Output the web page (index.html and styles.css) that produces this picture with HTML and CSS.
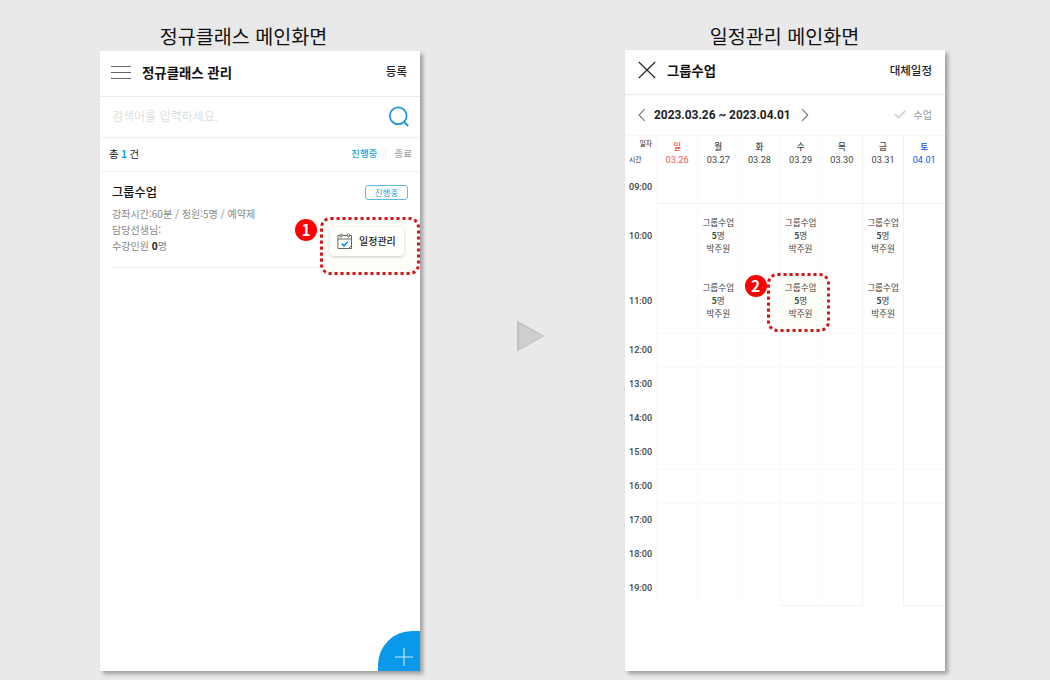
FILE: index.html
```
<!DOCTYPE html>
<html lang="ko">
<head>
    <meta charset="UTF-8">
    <meta name="viewport" content="width=device-width, initial-scale=1.0">
    <title>정규클래스 일정관리</title>
    <link rel="stylesheet" href="styles.css">
</head>
<body>
    <section class="screen">
        <h2 class="screen-title title-class">정규클래스 메인화면</h2>
        <div class="phone phone-class">
            <header class="app-header class-header">
                <svg class="menu-icon" width="20" height="14" viewBox="0 0 20 14" fill="none" stroke="#666">
                    <path d="M0 .5h20M0 6.5h20M0 12.5h20"/>
                </svg>
                <h1>정규클래스 관리</h1>
                <a class="header-link">등록</a>
            </header>
            <div class="search-bar">
                <span class="placeholder">검색어를 입력하세요.</span>
                <svg width="22" height="22" viewBox="0 0 22 22" fill="none" stroke="#1e96d6" stroke-width="1.8">
                    <circle cx="10.2" cy="9.8" r="8.4"/>
                    <path d="M15.9 15.8l4.3 4.2"/>
                </svg>
            </div>
            <div class="list-summary">
                <span class="total">총 <b>1</b> 건</span>
                <span class="tab-active">진행중</span>
                <span class="tab">종료</span>
            </div>
            <article class="class-item">
                <div class="class-name">
                    <h3>그룹수업</h3>
                    <span class="status">진행중</span>
                </div>
                <p>강좌시간:60분 / 정원:5명 / 예약제</p>
                <p>담당선생님:</p>
                <p>수강인원 <b>0</b>명</p>
                <div class="callout callout-schedule">
                    <svg class="outline" width="100" height="58">
                        <rect x="1.5" y="1.5" width="97" height="55" rx="9"/>
                    </svg>
                    <button class="schedule-button">
                        <svg width="16" height="17" viewBox="0 0 16 17" fill="none" stroke="#666" stroke-width="1">
                            <path d="M2.8 2.5H.9v13h10.6l3-3v-10h-1.8M5.2 2.5h5M.9 6h13.6M11.5 15.5h3v-3"/>
                            <rect x="3" y=".8" width="2" height="3.4" rx="1"/>
                            <rect x="10.4" y=".8" width="2" height="3.4" rx="1"/>
                            <path d="M5 10.6l2 2.3 3.8-4.2" stroke="#1e96d6" stroke-width="1.7"/>
                        </svg>
                        일정관리
                    </button>
                    <span class="step step-one">1</span>
                </div>
            </article>
            <div class="add-button">
                <svg width="18" height="18" viewBox="0 0 18 18" stroke="#c9edff" stroke-width="1.1">
                    <path d="M9 0v18M0 9h18"/>
                </svg>
            </div>
        </div>
    </section>

    <svg class="next-arrow" width="28" height="32" viewBox="0 0 28 32">
        <path d="M0 .5L27.5 16 0 31.5z" fill="#c2c2c2"/>
        <path d="M2.5 4.5L26 16 2.5 28.5z" fill="#cecece"/>
    </svg>

    <section class="screen">
        <h2 class="screen-title title-schedule">일정관리 메인화면</h2>
        <div class="phone phone-schedule">
            <header class="app-header schedule-header">
                <svg class="close-icon" width="18" height="18" viewBox="0 0 18 18" stroke="#222" stroke-width="1.1">
                    <path d="M.8 1l16.4 16M17.2 1L.8 17"/>
                </svg>
                <h1>그룹수업</h1>
                <a class="header-link">대체일정</a>
            </header>
            <div class="week-bar">
                <svg width="8" height="14" viewBox="0 0 8 14" fill="none" stroke="#777" stroke-width="1.1">
                    <path d="M6.8 1.2L1 7l5.8 5.8"/>
                </svg>
                <strong>2023.03.26 ~ 2023.04.01</strong>
                <svg width="8" height="14" viewBox="0 0 8 14" fill="none" stroke="#777" stroke-width="1.1">
                    <path d="M1 1.2L6.8 7 1 12.8"/>
                </svg>
                <span class="filter">
                    <svg width="12" height="9" viewBox="0 0 12 9" fill="none" stroke="#d0d0d0" stroke-width="1.8">
                        <path d="M.8 4.2l3.5 3.4L11.2.9"/>
                    </svg>
                    수업
                </span>
            </div>
            <div class="timetable">
                <div class="corner"><span>일자</span><span>시간</span></div>
                <div class="day sunday">일<span>03.26</span></div>
                <div class="day">월<span>03.27</span></div>
                <div class="day">화<span>03.28</span></div>
                <div class="day">수<span>03.29</span></div>
                <div class="day">목<span>03.30</span></div>
                <div class="day line">금<span>03.31</span></div>
                <div class="day line saturday">토<span>04.01</span></div>

                <div class="time first">09:00</div>
                <div class="cell ruled"></div><div class="cell ruled"></div><div class="cell ruled"></div><div class="cell ruled"></div><div class="cell ruled"></div><div class="cell ruled line"></div><div class="cell ruled line"></div>

                <div class="time">10:00</div>
                <div class="cell"></div>
                <div class="cell lesson">그룹수업<span><b>5</b>명</span><span>박주원</span></div>
                <div class="cell"></div>
                <div class="cell lesson">그룹수업<span><b>5</b>명</span><span>박주원</span></div>
                <div class="cell"></div>
                <div class="cell lesson line">그룹수업<span><b>5</b>명</span><span>박주원</span></div>
                <div class="cell line"></div>

                <div class="time">11:00</div>
                <div class="cell faint"></div>
                <div class="cell faint lesson">그룹수업<span><b>5</b>명</span><span>박주원</span></div>
                <div class="cell faint"></div>
                <div class="cell faint lesson selected">
                    <div class="callout callout-lesson">
                        <svg class="outline" width="63" height="59">
                            <rect x="1.5" y="1.5" width="60" height="56" rx="9"/>
                        </svg>
                        <i class="step step-two">2</i>
                    </div>
                    <span>그룹수업</span><span><b>5</b>명</span><span>박주원</span>
                </div>
                <div class="cell faint"></div>
                <div class="cell faint lesson line">그룹수업<span><b>5</b>명</span><span>박주원</span></div>
                <div class="cell faint line"></div>

                <div class="time">12:00</div>
                <div class="cell faint"></div><div class="cell faint"></div><div class="cell faint"></div><div class="cell faint"></div><div class="cell faint"></div><div class="cell faint line"></div><div class="cell faint line"></div>

                <div class="time">13:00</div>
                <div class="cell"></div><div class="cell"></div><div class="cell"></div><div class="cell"></div><div class="cell"></div><div class="cell line"></div><div class="cell line"></div>

                <div class="time">14:00</div>
                <div class="cell"></div><div class="cell"></div><div class="cell"></div><div class="cell"></div><div class="cell"></div><div class="cell line"></div><div class="cell line"></div>

                <div class="time">15:00</div>
                <div class="cell faint"></div><div class="cell faint"></div><div class="cell faint"></div><div class="cell faint"></div><div class="cell faint"></div><div class="cell faint line"></div><div class="cell faint line"></div>

                <div class="time">16:00</div>
                <div class="cell faint"></div><div class="cell faint"></div><div class="cell faint"></div><div class="cell faint"></div><div class="cell faint"></div><div class="cell faint line"></div><div class="cell faint line"></div>

                <div class="time">17:00</div>
                <div class="cell"></div><div class="cell"></div><div class="cell"></div><div class="cell"></div><div class="cell"></div><div class="cell line"></div><div class="cell line"></div>

                <div class="time">18:00</div>
                <div class="cell"></div><div class="cell"></div><div class="cell"></div><div class="cell"></div><div class="cell"></div><div class="cell line"></div><div class="cell line"></div>

                <div class="time">19:00</div>
                <div class="cell"></div><div class="cell"></div><div class="cell"></div><div class="cell ruled"></div><div class="cell ruled"></div><div class="cell line"></div><div class="cell ruled line"></div>
            </div>
        </div>
    </section>
</body>
</html>
```
FILE: styles.css
```
* {
    margin: 0;
    padding: 0;
    box-sizing: border-box;
}

body {
    display: flex;
    height: 680px;
    padding: 0 105px 0 100px;
    background: #e9e9e9;
    color: #222;
    font-family: 'Noto Sans CJK KR', sans-serif;
    overflow: hidden;
}

svg {
    display: block;
    flex: none;
}

.screen {
    flex: none;
    width: 320px;
    padding-top: 21px;
}

.screen-title {
    font-size: 19.6px;
    font-weight: 400;
    color: #111;
    text-align: center;
    line-height: 30px;
    white-space: nowrap;
}

.title-class {
    padding-right: 33px;
}

.title-schedule {
    height: 29px;
    padding-right: 1px;
}

.phone {
    position: relative;
    background: #fff;
    box-shadow: 3px 3px 4px rgba(0, 0, 0, 0.32);
}

.phone-class {
    height: 620px;
}

.phone-schedule {
    height: 621px;
}

.app-header {
    display: flex;
    align-items: center;
    padding: 0 13px 3px 11px;
    height: 46px;
    border-bottom: 1px solid #ececec;
}

.class-header {
    padding-bottom: 4px;
}

.menu-icon {
    margin-top: 2px;
}

.schedule-header {
    height: 45px;
    padding-bottom: 4px;
}

.app-header h1 {
    margin-left: 11px;
    font-size: 13.4px;
    font-weight: 700;
    color: #111;
}

.schedule-header h1 {
    font-size: 13.3px;
}

.close-icon {
    margin-left: 2px;
}

.header-link {
    margin-left: auto;
    padding-bottom: 1px;
    font-size: 11.5px;
    font-weight: 500;
}

.search-bar {
    display: flex;
    align-items: center;
    justify-content: space-between;
    height: 41px;
    padding: 0 10px 0 12px;
    border-bottom: 1px solid #efefef;
}

.placeholder {
    padding-bottom: 3px;
    font-size: 12px;
    font-weight: 300;
    color: #cfcfcf;
}

.list-summary {
    display: flex;
    align-items: center;
    height: 34px;
    padding: 0 8px 3px 9px;
    border-bottom: 1px solid #f1f1f1;
    font-size: 9.5px;
}

.total {
    margin-right: auto;
    font-size: 10.4px;
    word-spacing: -0.5px;
}

.total b,
.tab-active {
    color: #1e9fe0;
}

.total b {
    font-weight: 700;
}

.tab-active {
    font-weight: 500;
}

.tab {
    margin-left: 7px;
    padding-left: 9px;
    border-left: 1px solid #eee;
    line-height: 10px;
    color: #999;
}

.class-item {
    position: relative;
    height: 96px;
    margin: 0 12px;
    padding-top: 12px;
    border-bottom: 1px solid #ececec;
    color: #888;
}

.class-name {
    display: flex;
    justify-content: space-between;
    height: 22px;
}

.class-name h3 {
    font-size: 12.2px;
    line-height: 17px;
    font-weight: 500;
    color: #111;
}

.status {
    width: 43px;
    height: 15px;
    margin-top: 1px;
    border: 1px solid #62b9e6;
    border-radius: 3px;
    font-size: 8.5px;
    line-height: 12px;
    text-align: center;
    color: #1e9fe0;
}

.class-item p {
    font-size: 10.05px;
    line-height: 16px;
}

.class-item p b {
    color: #222;
}

/* dotted highlight boxes */
.callout {
    position: absolute;
    border-radius: 10px;
    background: #fefef8;
}

.outline {
    position: absolute;
    top: 0;
    left: 0;
    fill: none;
    stroke: #d2161e;
    stroke-width: 3;
    stroke-dasharray: 3.1 2.9;
}

.callout-schedule {
    top: 45px;
    right: -12px;
    width: 100px;
    height: 58px;
    padding: 10px 0 0 10px;
}

.callout-lesson {
    top: 4px;
    left: -14px;
    width: 63px;
    height: 59px;
}

.schedule-button {
    display: flex;
    align-items: center;
    gap: 6px;
    width: 74px;
    height: 29px;
    padding: 0 0 2px 7px;
    border: none;
    border-radius: 4px;
    background: #fffffc;
    box-shadow: 0 1px 3px rgba(0, 0, 0, 0.2);
    color: #222;
    font-family: inherit;
    font-size: 10px;
    font-weight: 500;
    white-space: nowrap;
}

.schedule-button svg {
    margin-top: 2px;
}

.step {
    position: absolute;
    width: 22px;
    height: 22px;
    border-radius: 50%;
    background: #f00;
    color: #fff;
    font-size: 15.5px;
    font-style: normal;
    font-weight: 700;
    line-height: 20px;
    text-align: center;
}

.step-one {
    top: 2px;
    left: -25px;
}

.step-two {
    top: 2px;
    left: -22px;
}

.add-button {
    position: absolute;
    right: 0;
    bottom: 0;
    width: 42px;
    height: 40px;
    padding: 17px 0 0 17px;
    border-radius: 34px 0 0 0;
    background: #0a98e8;
}

.next-arrow {
    margin: 320px 80px 0 97px;
}

.week-bar {
    display: flex;
    align-items: center;
    height: 40px;
    padding: 0 13px 1px;
}

.week-bar strong {
    margin: 0 10px 0 8px;
    font-family: Roboto, sans-serif;
    font-size: 11.9px;
    font-weight: 700;
    white-space: nowrap;
}

.filter {
    display: flex;
    align-items: center;
    gap: 8px;
    margin-left: auto;
    padding-bottom: 1px;
    font-size: 10px;
    color: #999;
}

.timetable {
    display: grid;
    grid-template-columns: 31px repeat(7, 41.2px);
    grid-template-rows: 34px 34px 65px 65px repeat(8, 34px);
    width: 320px;
    overflow: hidden;
    border-top: 1px solid #f8f8f8;
    font-size: 8.6px;
}

.corner {
    display: flex;
    flex-direction: column;
    justify-content: space-between;
    padding: 2px 4px 6px;
    font-size: 6.8px;
    line-height: 10px;
}

.corner span:first-child {
    text-align: right;
}

.day {
    padding-top: 4px;
    border-left: 1px solid #fafafa;
    text-align: center;
    line-height: 13px;
    font-weight: 500;
    color: #444;
}

.day span {
    display: block;
    font-family: Roboto, sans-serif;
    font-size: 9.2px;
    font-weight: 400;
}

.sunday {
    color: #f4564c;
}

.saturday {
    color: #1456e0;
}

.time {
    display: flex;
    align-items: center;
    padding: 0 0 2px 4px;
    font-family: Roboto, sans-serif;
    font-size: 9.1px;
    font-weight: 500;
    color: #444;
}

.first {
    padding-bottom: 0;
}

.cell {
    position: relative;
    border-left: 1px solid #fafafa;
}

.ruled {
    border-bottom: 1px solid #f2f2f2;
}

.faint {
    border-bottom: 1px solid #f9f9f9;
}

.line {
    border-left-color: #f1f1f1;
}

.lesson {
    padding-top: 12px;
    text-align: center;
    line-height: 12.9px;
    color: #444;
}

.lesson > span {
    display: block;
    position: relative;
}

/* keeps the highlight above the neighbouring cells */
.selected {
    z-index: 1;
}
```
